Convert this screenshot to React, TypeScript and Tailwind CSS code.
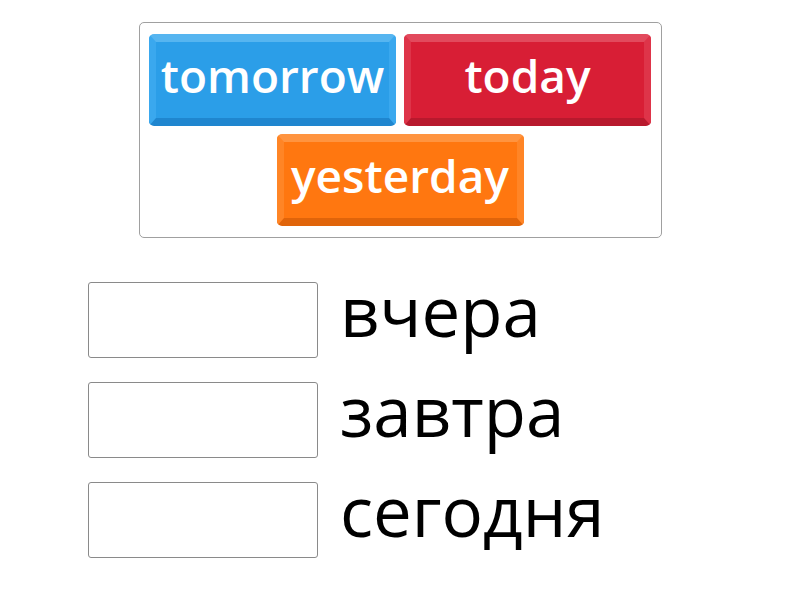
import React from "react";

function Tile({ label, cls }: { label: string; cls: string }) {
  return (
    <div className={`w-[247px] h-[92px] rounded-[5px] flex items-center justify-center ${cls}`}>
      <span className="text-white font-semibold text-[46px] leading-none pb-[10px]">{label}</span>
    </div>
  );
}

export default function App() {
  const rows = ["вчера", "завтра", "сегодня"];
  return (
    <div className="w-[800px] h-[600px] bg-white" style={{ fontFamily: '"Open Sans", sans-serif' }}>
      <div className="pt-[22px] flex justify-center">
        <div className="w-[523px] h-[216px] border border-[#a0a0a0] rounded-[5px] px-[10px] pt-[11px] flex flex-col items-center gap-[8px]">
          <div className="flex gap-[8px]">
            <Tile
              label="tomorrow"
              cls="bg-[#2b9ee8] border-t-[8px] border-t-[#56b5f0] border-b-[8px] border-b-[#1f86cf] border-x-[7px] border-x-[#3aa8ee]"
            />
            <Tile
              label="today"
              cls="bg-[#d81e35] border-t-[8px] border-t-[#e24a5d] border-b-[8px] border-b-[#b8192d] border-x-[7px] border-x-[#de3449]"
            />
          </div>
          <Tile
            label="yesterday"
            cls="bg-[#ff7710] border-t-[8px] border-t-[#ff9440] border-b-[8px] border-b-[#e0640a] border-x-[7px] border-x-[#ff8526]"
          />
        </div>
      </div>
      <div className="pl-[88px] pt-[44px] flex flex-col gap-[24px]">
        {rows.map((r) => (
          <div key={r} className="flex items-center gap-[22px] h-[76px]">
            <div className="w-[230px] h-[76px] border border-[#8a8a8a] rounded-[3px] shrink-0" />
            <span className="text-[69px] leading-none text-black pb-[20px]">{r}</span>
          </div>
        ))}
      </div>
    </div>
  );
}
